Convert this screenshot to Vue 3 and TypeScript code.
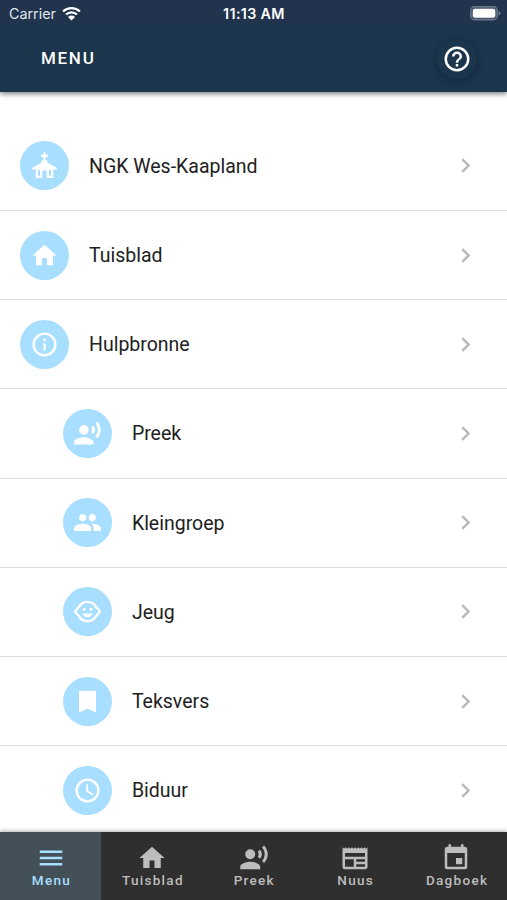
<script setup lang="ts">
interface Icon { d: string; evenodd?: boolean }
interface Row { label: string; icon: string; nested?: boolean }
interface Tab { label: string; icon: string; active?: boolean }

const icons: Record<string, Icon> = {
  church: { d: 'M11.100 1.300h1.800v1.900h2v1.800h-2v2.200l1.600 1.300v1.200l5.500 2.900L22.200 14v1.400h-2.900v6.900h-5.500V17.500a1.800 1.800 0 0 0-3.600 0v4.800H4.700v-6.900H1.800V14L4 12.600l5.500-2.900V8.500l1.600-1.300V5h-2V3.200h2zM6.600 15.800v4.600h1.700v-4.600zM15.700 15.800v4.600h1.700v-4.600z', evenodd: true },
  home: { d: 'M10 20v-6h4v6h5v-8h3L12 3 2 12h3v8z' },
  info: { d: 'M11 9h2V7h-2m1 13a8 8 0 1 1 0-16 8 8 0 0 1 0 16m0-18a10 10 0 1 0 0 20 10 10 0 0 0 0-20m-1 15h2v-6h-2z' },
  voice: { d: 'M9 5a4 4 0 1 1 0 8 4 4 0 0 1 0-8m0 10c2.670 0 8 1.340 8 4v2H1v-2c0-2.660 5.330-4 8-4m7.760-9.640c2.020 2.200 2.020 5.250 0 7.270l-1.680-1.690c.84-1.180.84-2.710 0-3.890l1.680-1.690M20.070 2c3.930 4.050 3.900 10.110 0 14l-1.630-1.630c2.770-3.180 2.770-7.720 0-10.740L20.070 2z' },
  people: { d: 'M16 11c1.660 0 2.990-1.340 2.990-3S17.660 5 16 5s-3 1.340-3 3 1.340 3 3 3zm-8 0c1.660 0 2.990-1.340 2.990-3S9.660 5 8 5 5 6.340 5 8s1.340 3 3 3zm0 2c-2.330 0-7 1.170-7 3.500V19h14v-2.500c0-2.330-4.670-3.500-7-3.500zm8 0c-.290 0-.620.020-.970.050 1.160.840 1.970 1.970 1.970 3.450V19h6v-2.500c0-2.330-4.670-3.500-7-3.500z' },
  face: { d: 'M7.950 10.200a1.250 1.250 0 1 1 2.500 0 1.250 1.250 0 0 1-2.500 0M13.550 10.200a1.250 1.250 0 1 1 2.500 0 1.250 1.250 0 0 1-2.500 0M7.700 13.700h8.600c-.7 1.900-2.300 3-4.300 3s-3.600-1.100-4.300-3M12 3c3.400 0 6.300 1.700 7.900 4.700l2.500 2.600c1 1 1 2.400 0 3.400l-2.500 2.600C18.300 19.300 15.400 21 12 21s-6.300-1.700-7.900-4.700l-2.500-2.600c-1-1-1-2.400 0-3.400l2.500-2.600C5.700 4.700 8.600 3 12 3M12 4.900c-2.700 0-5.100 1.500-6.300 3.900L3 11.600a.6.6 0 0 0 0 .8l2.700 2.800c1.200 2.400 3.600 3.900 6.300 3.900s5.100-1.500 6.300-3.900l2.700-2.800a.6.6 0 0 0 0-.8l-2.700-2.800C17.100 6.400 14.700 4.900 12 4.900z', evenodd: true },
  bookmark: { d: 'M18.200 3H5.800A.8.8 0 0 0 5 3.800V21l7-3 7 3V3.800a.8.8 0 0 0-.8-.8z' },
  clock: { d: 'M12 20a8 8 0 1 0 0-16 8 8 0 0 0 0 16m0-18a10 10 0 1 1 0 20 10 10 0 0 1 0-20m.5 5v5.250l4.500 2.670-.75 1.230L11 13V7z' },
  help: { d: 'M11 18h2v-2h-2v2m1-16a10 10 0 1 0 0 20 10 10 0 0 0 0-20m0 18a8 8 0 1 1 0-16 8 8 0 0 1 0 16m0-14a4 4 0 0 0-4 4h2a2 2 0 1 1 4 0c0 2-3 1.750-3 5h2c0-2.250 3-2.500 3-5a4 4 0 0 0-4-4z' },
  menu: { d: 'M3 6h18v2H3V6m0 5h18v2H3v-2m0 5h18v2H3v-2z' },
  news: { d: 'M20 11H4V8h16m0 7h-7v-2h7m0 6h-7v-2h7m-9 2H4v-6h7M22 3.300l-1.250 1.250L19.500 3.300l-1.250 1.250L17 3.300l-1.250 1.250L14.500 3.300l-1.250 1.250L12 3.300l-1.250 1.250L9.500 3.300 8.250 4.550 7 3.300 5.750 4.550 4.500 3.300 3.250 4.550 2 3.300V19a2 2 0 0 0 2 2h16a2 2 0 0 0 2-2z' },
  calendar: { d: 'M19 19H5V8h14m-3-7v2H8V1H6v2H5a2 2 0 0 0-2 2v14a2 2 0 0 0 2 2h14a2 2 0 0 0 2-2V5a2 2 0 0 0-2-2h-1V1m-1 11h-5v5h5v-5z' },
  chevron: { d: 'M8.590 16.590L13.170 12 8.590 7.410 10 6l6 6-6 6-1.410-1.410z' },
}

const rows: Row[] = [
  { label: 'NGK Wes-Kaapland', icon: 'church' },
  { label: 'Tuisblad', icon: 'home' },
  { label: 'Hulpbronne', icon: 'info' },
  { label: 'Preek', icon: 'voice', nested: true },
  { label: 'Kleingroep', icon: 'people', nested: true },
  { label: 'Jeug', icon: 'face', nested: true },
  { label: 'Teksvers', icon: 'bookmark', nested: true },
  { label: 'Biduur', icon: 'clock', nested: true },
]

const tabs: Tab[] = [
  { label: 'Menu', icon: 'menu', active: true },
  { label: 'Tuisblad', icon: 'home' },
  { label: 'Preek', icon: 'voice' },
  { label: 'Nuus', icon: 'news' },
  { label: 'Dagboek', icon: 'calendar' },
]
</script>

<template>
  <div class="screen">
    <header class="header">
      <div class="status">
        <div class="carrier">
          <span>Carrier</span>
          <svg class="wifi" viewBox="0 0 18 14">
            <path d="M1 5.100a11.500 11.500 0 0 1 16 0M3.800 8a7.500 7.500 0 0 1 10.400 0" fill="none" stroke="#fff" stroke-width="2.100" />
            <path d="M5.700 10.200a4.700 4.700 0 0 1 6.600 0L9 13.600z" fill="#fff" />
          </svg>
        </div>
        <span class="time">11:13 AM</span>
        <svg class="battery" viewBox="0 0 31 15">
          <rect x=".75" y=".75" width="26.500" height="13" rx="3.800" fill="#42526a" stroke="#6c788c" stroke-width="1.300" />
          <rect x="2.800" y="2.700" width="22.500" height="9" rx="2" fill="#fff" />
          <path d="M28.500 5q2 .6 2 2.300t-2 2.300z" fill="#6c788c" />
        </svg>
      </div>
      <div class="toolbar">
        <h1>MENU</h1>
        <button class="help" aria-label="Hulp">
          <svg viewBox="0 0 24 24"><path :d="icons.help.d" /></svg>
        </button>
      </div>
    </header>

    <main class="list">
      <div v-for="row in rows" :key="row.label" class="row" :class="{ nested: row.nested }">
        <span class="avatar">
          <svg viewBox="0 0 24 24"><path :d="icons[row.icon].d" :fill-rule="icons[row.icon].evenodd ? 'evenodd' : 'nonzero'" /></svg>
        </span>
        <span class="label">{{ row.label }}</span>
        <svg class="chevron" viewBox="0 0 24 24"><path :d="icons.chevron.d" /></svg>
      </div>
    </main>

    <nav class="tabs">
      <div v-for="tab in tabs" :key="tab.label" class="tab" :class="{ active: tab.active }">
        <svg viewBox="0 0 24 24"><path :d="icons[tab.icon].d" /></svg>
        <span>{{ tab.label }}</span>
      </div>
    </nav>
  </div>
</template>

<style>
body { background: #fff; overflow: hidden; }
</style>

<style scoped>
.screen {
  display: flex;
  flex-direction: column;
  height: 900px;
  overflow: hidden;
  font-family: Roboto, sans-serif;
  background: #fff;
}
.header {
  flex: none;
  height: 92px;
  background: #1b354c;
  box-shadow: 0 2px 5px rgba(0, 0, 0, .5);
  color: #fff;
  z-index: 1;
}
.status {
  display: grid;
  grid-template-columns: 1fr auto 1fr;
  align-items: center;
  height: 27px;
  padding: 0 6px 0 9px;
  background: linear-gradient(#21334d 80%, #1b354c);
  font-family: Inter, sans-serif;
  font-size: 14.300px;
}
.carrier { display: flex; align-items: center; gap: 6px; color: #dfe5ec; }
.wifi { width: 19px; height: 15px; margin-bottom: 1px; }
.time { font-weight: 600; font-size: 14.300px; letter-spacing: .35px; margin-right: 2px; }
.battery { width: 31px; height: 15px; justify-self: end; }
.toolbar {
  display: flex;
  align-items: center;
  justify-content: space-between;
  height: 64px;
  padding: 0 30.500px 0 41px;
}
h1 {
  margin: -2px 0 0;
  font-size: 17px;
  font-weight: 500;
  letter-spacing: 1.700px;
}
.help {
  display: grid;
  place-items: center;
  width: 40px;
  height: 40px;
  padding: 0;
  border: 0;
  border-radius: 50%;
  background: #1b354c;
  box-shadow: 0 2px 6px rgba(5, 20, 50, .4);
}
.help svg { width: 30px; height: 30px; fill: #fff; }
.list { flex: 1; min-height: 0; padding-top: 29.800px; overflow: hidden; }
.row {
  display: flex;
  align-items: center;
  box-sizing: border-box;
  height: 89.200px;
  padding: 0 27px 0 20.400px;
  border-bottom: 1px solid #e0e0e0;
}
.row:last-child { border-bottom-color: transparent; }
.nested { padding-left: 63.300px; }
.avatar {
  display: grid;
  place-items: center;
  flex: none;
  width: 49px;
  height: 49px;
  border-radius: 50%;
  background: #a8deff;
}
.avatar svg { width: 29px; height: 29px; fill: #fff; }
.label {
  flex: 1;
  margin-left: 19.600px;
  padding-top: 1px;
  font-size: 19.500px;
  color: #212121;
}
.nested .label { margin-left: 19.600px; }
.chevron { width: 29px; height: 29px; fill: #b9b9b9; }
.tabs {
  display: flex;
  flex: none;
  height: 68px;
  background: #2f2f2f;
  box-shadow: 0 -1px 4px rgba(0, 0, 0, .3);
  z-index: 1;
}
.tab {
  display: flex;
  flex: 1;
  flex-direction: column;
  align-items: center;
  box-sizing: border-box;
  padding: 11px 0 0;
  color: #bdbdbd;
  fill: currentColor;
  font-size: 13.500px;
  font-weight: 500;
  line-height: 15px;
  letter-spacing: 1.300px;
}
.tab svg { width: 30px; height: 30px; }
.tab span { padding-left: 1.500px; }
.active { background: #445057; color: #a8deff; }
</style>
